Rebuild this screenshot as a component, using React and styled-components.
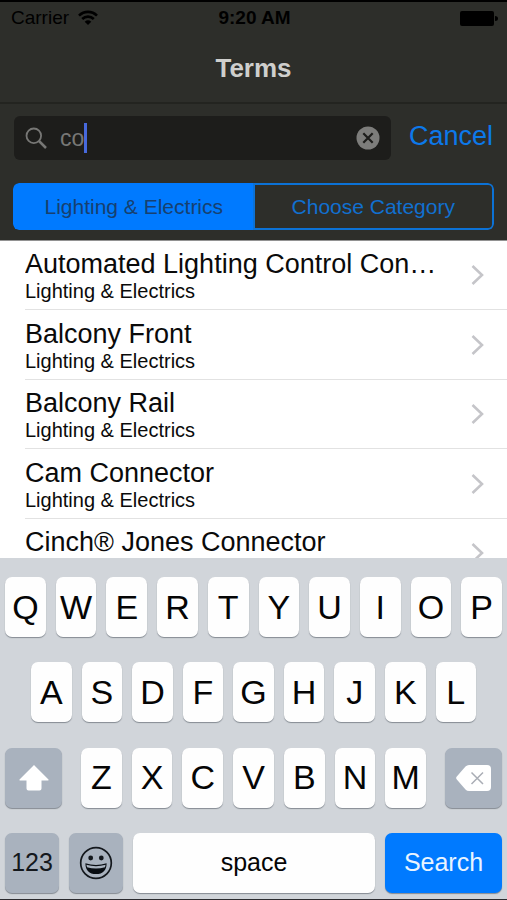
import React, { useState } from "react";
import styled, { createGlobalStyle } from "styled-components";

const GlobalStyle = createGlobalStyle`
  *, *::before, *::after { box-sizing: border-box; }
  body { margin: 0; background: #fff; }
  body, button, input { font-family: "Liberation Sans", Arial, sans-serif; }
  button { margin: 0; padding: 0; border: 0; background: none; color: inherit; }
  svg { display: block; flex: none; }
`;

const Screen = styled.div`
  display: flex;
  flex-direction: column;
  height: 100vh;
  border-top: 2px solid #000;
  border-bottom: 1px solid #2b2b2f;
  overflow: hidden;
`;

const Header = styled.header`
  flex: none;
  background: #2d2e2a;
  border-bottom: 1px solid #929292;
`;

const StatusBar = styled.div`
  display: grid;
  grid-template-columns: 1fr auto 1fr;
  align-items: center;
  height: 32px;
  padding: 0 9px 0 11px;
  color: #000;
  font-size: 19px;
`;

const Carrier = styled.div`
  display: flex;
  align-items: center;
  gap: 9px;
`;

const Clock = styled.time`
  font-weight: 700;
`;

const Battery = styled.div`
  justify-self: end;
`;

const TitleBar = styled.div`
  display: flex;
  align-items: center;
  justify-content: center;
  height: 70px;
  border-bottom: 2px solid #232420;
`;

const Title = styled.h1`
  margin: 0;
  color: #cfcfcd;
  font-size: 26px;
  line-height: 32px;
`;

const SearchBar = styled.form`
  display: flex;
  align-items: center;
  gap: 18px;
  padding: 12px 14px 0;
`;

const SearchField = styled.label`
  display: flex;
  align-items: center;
  flex: 1;
  min-width: 0;
  height: 44px;
  padding: 0 11px;
  border-radius: 6px;
  background: #1d1d1b;
  cursor: text;
`;

const SearchInput = styled.input`
  field-sizing: content;
  min-width: 1px;
  max-width: 100%;
  margin-left: 13px;
  padding: 0;
  border: 0;
  outline: 0;
  background: none;
  color: #777775;
  caret-color: transparent;
  font-size: 23px;
`;

const Caret = styled.span`
  width: 3px;
  height: 30px;
  background: #4769dc;
`;

const ClearButton = styled.button`
  margin-left: auto;
`;

const CancelButton = styled.button`
  color: #0c79ea;
  font-size: 27px;
  line-height: 32px;
  padding-bottom: 4px;
`;

const Segments = styled.div`
  display: flex;
  height: 47px;
  margin: 23px 13px 10px;
  border-radius: 6px;
  overflow: hidden;
`;

const Segment = styled.button`
  flex: 1;
  border: 2px solid ${(p) => (p.$active ? "#007aff" : "#0c72d6")};
  background: ${(p) => (p.$active ? "#007aff" : "transparent")};
  color: ${(p) => (p.$active ? "#17406f" : "#1170d0")};
  font-size: 21px;
  &:first-child { border-right-width: 0; border-radius: 6px 0 0 6px; }
  &:last-child { border-radius: 0 6px 6px 0; }
`;

const TermList = styled.ul`
  flex: 1;
  min-height: 0;
  margin: 0;
  padding: 0;
  overflow: hidden;
  list-style: none;
  background: #fff;
`;

const TermItem = styled.li`
  height: 69px;
  padding-left: 25px;
  &:nth-child(even) { height: 70px; }
`;

const TermLink = styled.a`
  display: flex;
  align-items: center;
  height: 100%;
  padding-right: 22px;
  border-bottom: 1px solid #e2e2e2;
  color: #0a0a0a;
  text-decoration: none;
`;

const TermText = styled.span`
  flex: 1;
  min-width: 0;
  min-height: 54px;
  margin-right: 22px;
`;

const TermName = styled.span`
  display: block;
  overflow: hidden;
  white-space: nowrap;
  text-overflow: ellipsis;
  font-size: 27px;
  line-height: 32px;
`;

const TermCategory = styled.span`
  display: block;
  font-size: 20px;
  line-height: 22px;
`;

const Keyboard = styled.div`
  display: flex;
  flex-direction: column;
  justify-content: space-between;
  flex: none;
  height: 341px;
  padding: 19px 5px 6px;
  background: #d1d5da;
`;

const KeyRow = styled.div`
  display: flex;
  gap: 10px;
  padding: 0 ${(p) => p.$inset || 0}px;
`;

const LetterGroup = styled(KeyRow)`
  flex: 1;
  margin: 0 9px;
  padding: 0;
`;

const keyTones = {
  light: { background: "#fefefe", color: "#050505" },
  dark: { background: "#a9b2be", color: "#14181d" },
  blue: { background: "#007aff", color: "#e9f4ff" },
};

const Key = styled.button`
  display: flex;
  align-items: center;
  justify-content: center;
  flex: ${(p) => (p.$width ? `0 0 ${p.$width}px` : "1 1 0")};
  min-width: 0;
  height: 60px;
  border-radius: 7px;
  background: ${(p) => keyTones[p.$tone || "light"].background};
  color: ${(p) => keyTones[p.$tone || "light"].color};
  box-shadow: 0 1px 1px #858b93;
  font-size: ${(p) => (p.$word ? 25 : 34)}px;
`;

const WifiIcon = () => (
  <svg width="20" height="16" viewBox="0 0 20 16" fill="none" stroke="#000" strokeWidth="2.6">
    <path d="M1 5.6C6 .6 14 .6 19 5.6M4.2 9C7.5 5.8 12.5 5.8 15.8 9" />
    <path d="M10 15 6.7 11.7Q10 9 13.3 11.7Z" fill="#000" stroke="none" />
  </svg>
);

const BatteryIcon = () => (
  <svg width="38" height="15" viewBox="0 0 38 15" fill="#000" role="img" aria-label="Battery full">
    <rect width="34" height="15" rx="2" />
    <path d="M35 5Q38 5 38 7.5T35 10Z" />
  </svg>
);

const SearchIcon = () => (
  <svg width="22" height="22" viewBox="0 0 22 22" fill="none" stroke="#777775">
    <circle cx="8.8" cy="8.8" r="7.3" strokeWidth="1.8" />
    <path d="m14 14 7 7" strokeWidth="2.5" />
  </svg>
);

const ClearIcon = () => (
  <svg width="24" height="24" viewBox="0 0 24 24">
    <circle cx="12" cy="12" r="11.5" fill="#7d7d7b" />
    <path d="m7.3 7.3 9.4 9.4m0-9.4-9.4 9.4" stroke="#1d1d1b" strokeWidth="2.2" />
  </svg>
);

const Chevron = () => (
  <svg width="14" height="20" viewBox="0 0 14 20" fill="none" stroke="#c5c5c9" strokeWidth="2.6">
    <path d="m1.500 1 9.500 9-9.500 9" />
  </svg>
);

const ShiftIcon = () => (
  <svg width="30" height="26" viewBox="0 0 30 26" fill="#fff">
    <path d="M15 0 29.5 14.5Q30 15.4 29 15.4H22.5V23.5Q22.5 25.5 20.5 25.5H9.5Q7.5 25.5 7.5 23.5V15.4H1Q0 15.4.5 14.5Z" />
  </svg>
);

const DeleteIcon = () => (
  <svg width="35" height="26" viewBox="0 0 35 26">
    <path d="M13 0H31Q35 0 35 4V22Q35 26 31 26H13Q11 26 9.5 24.5L.8 14.6Q-.5 13 .8 11.4L9.5 1.5Q11 0 13 0Z" fill="#fff" />
    <path d="m15.5 7.5 11.5 11.5m0-11.5-11.5 11.5" stroke="#a9adb5" strokeWidth="1.5" fill="none" />
  </svg>
);

const EmojiIcon = () => (
  <svg width="34" height="34" viewBox="0 0 34 34">
    <circle cx="17" cy="17" r="15.3" fill="none" stroke="#14181d" strokeWidth="1.7" />
    <circle cx="11.7" cy="12" r="2.4" fill="#14181d" />
    <circle cx="22.3" cy="12" r="2.4" fill="#14181d" />
    <path d="M6.4 17.2Q17 20.8 27.6 17.2Q27.5 28 17 28T6.4 17.2Z" fill="#080c11" />
    <path d="M7.4 18.7Q17 21.6 26.6 18.7L26 21.2Q17 24 8 21.2Z" fill="#a9b2be" />
  </svg>
);

const terms = [
  { name: "Automated Lighting Control Console", category: "Lighting & Electrics" },
  { name: "Balcony Front", category: "Lighting & Electrics" },
  { name: "Balcony Rail", category: "Lighting & Electrics" },
  { name: "Cam Connector", category: "Lighting & Electrics" },
  { name: "Cinch® Jones Connector" },
];

const letters = (keys, type) =>
  [...keys].map((k) => (
    <Key key={k} type="button" onClick={() => type(k.toLowerCase())}>
      {k}
    </Key>
  ));

export default function App() {
  const [query, setQuery] = useState("co");
  const [segment, setSegment] = useState(0);
  const type = (text) => setQuery((q) => q + text);

  return (
    <>
      <GlobalStyle />
      <Screen>
        <Header>
          <StatusBar>
            <Carrier>
              Carrier <WifiIcon />
            </Carrier>
            <Clock>9:20 AM</Clock>
            <Battery>
              <BatteryIcon />
            </Battery>
          </StatusBar>
          <TitleBar>
            <Title>Terms</Title>
          </TitleBar>
          <SearchBar onSubmit={(e) => e.preventDefault()}>
            <SearchField htmlFor="term-search">
              <SearchIcon />
              <SearchInput
                id="term-search"
                aria-label="Search terms"
                value={query}
                onChange={(e) => setQuery(e.target.value)}
              />
              <Caret />
              <ClearButton type="button" aria-label="Clear search" onClick={() => setQuery("")}>
                <ClearIcon />
              </ClearButton>
            </SearchField>
            <CancelButton type="button">Cancel</CancelButton>
          </SearchBar>
          <Segments role="group" aria-label="Category">
            {["Lighting & Electrics", "Choose Category"].map((label, i) => (
              <Segment
                key={label}
                type="button"
                $active={segment === i}
                aria-pressed={segment === i}
                onClick={() => setSegment(i)}
              >
                {label}
              </Segment>
            ))}
          </Segments>
        </Header>
        <TermList>
          {terms.map(({ name, category }) => (
            <TermItem key={name}>
              <TermLink href="#term">
                <TermText>
                  <TermName>{name}</TermName>
                  {category && <TermCategory>{category}</TermCategory>}
                </TermText>
                <Chevron />
              </TermLink>
            </TermItem>
          ))}
        </TermList>
        <Keyboard>
          <KeyRow>{letters("QWERTYUIOP", type)}</KeyRow>
          <KeyRow $inset={26}>{letters("ASDFGHJKL", type)}</KeyRow>
          <KeyRow>
            <Key type="button" $tone="dark" $width={57} aria-label="Shift">
              <ShiftIcon />
            </Key>
            <LetterGroup>{letters("ZXCVBNM", type)}</LetterGroup>
            <Key
              type="button"
              $tone="dark"
              $width={57}
              aria-label="Delete"
              onClick={() => setQuery((q) => q.slice(0, -1))}
            >
              <DeleteIcon />
            </Key>
          </KeyRow>
          <KeyRow>
            <Key type="button" $tone="dark" $width={54} $word>123</Key>
            <Key type="button" $tone="dark" $width={54} aria-label="Emoji">
              <EmojiIcon />
            </Key>
            <Key type="button" $word onClick={() => type(" ")}>space</Key>
            <Key type="button" $tone="blue" $width={117} $word>Search</Key>
          </KeyRow>
        </Keyboard>
      </Screen>
    </>
  );
}
